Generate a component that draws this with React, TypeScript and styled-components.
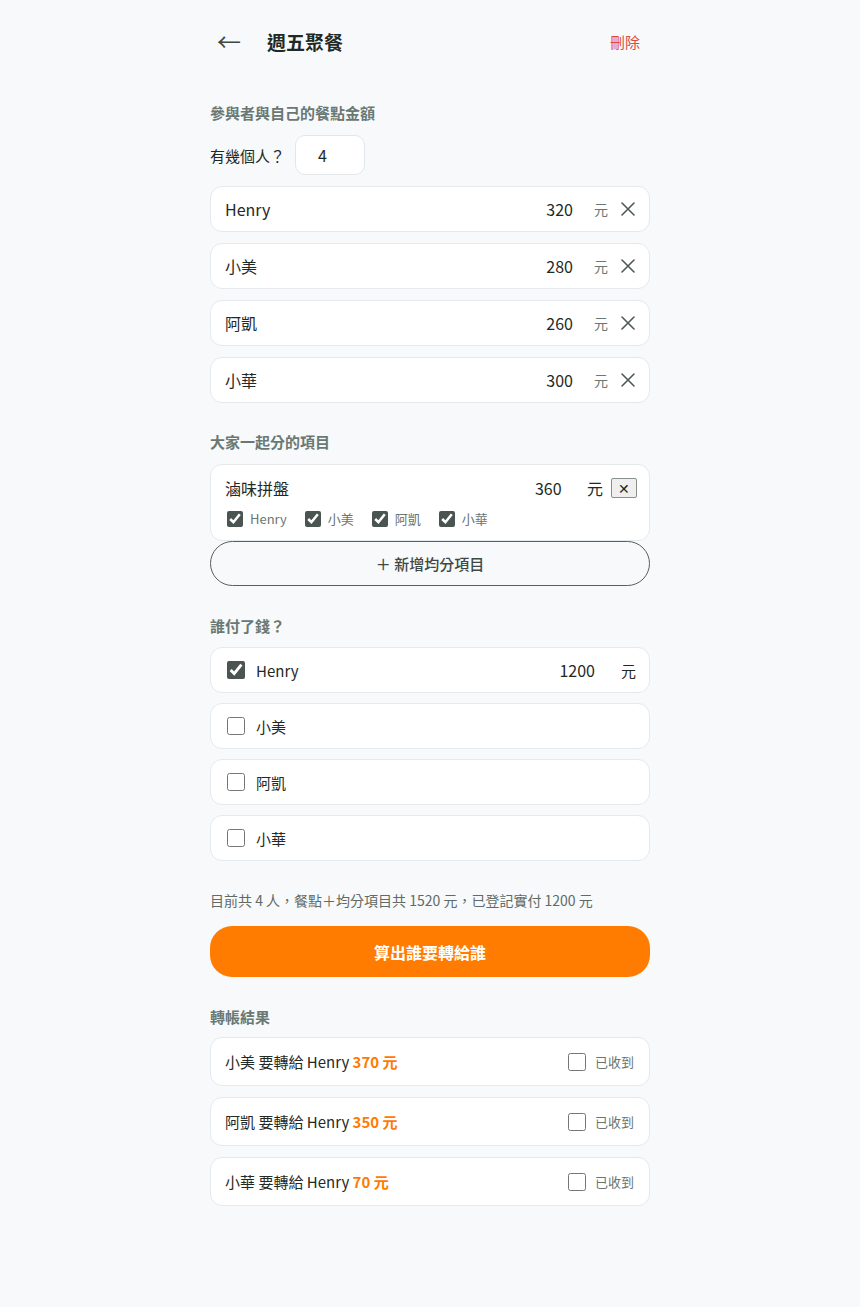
import React from "react";
import styled, { createGlobalStyle } from "styled-components";

const GlobalStyle = createGlobalStyle`
	body {
		margin: 0;
		background: #f7f9fb;
		font-family: "Noto Sans CJK TC", "Noto Sans", sans-serif;
		color: #1f2925;
	}
	input, button {
		font-family: inherit;
	}
`;

const people = [
	{ name: "Henry", amount: 320 },
	{ name: "小美", amount: 280 },
	{ name: "阿凱", amount: 260 },
	{ name: "小華", amount: 300 }
];

const payers = [
	{ name: "Henry", paid: true, amount: 1200 },
	{ name: "小美", paid: false },
	{ name: "阿凱", paid: false },
	{ name: "小華", paid: false }
];

const transfers = [
	{ from: "小美", to: "Henry", amount: 370 },
	{ from: "阿凱", to: "Henry", amount: 350 },
	{ from: "小華", to: "Henry", amount: 70 }
];

const CloseIcon = () => (
	<svg width="14" height="14" viewBox="0 0 14 14" fill="none" stroke="#4f5a55" strokeWidth="1.6" strokeLinecap="round">
		<path d="M1 1L13 13M13 1L1 13" />
	</svg>
);

export default function App() {
	return (
		<Page>
			<GlobalStyle />
			<Header>
				<BackButton aria-label="back">←</BackButton>
				<Title>週五聚餐</Title>
				<DeleteButton>刪除</DeleteButton>
			</Header>

			<SectionLabel $top={42}>參與者與自己的餐點金額</SectionLabel>
			<CountRow>
				有幾個人？
				<CountInput defaultValue="4" />
			</CountRow>
			<List $gap={11} $top={11}>
				{people.map((p) => (
					<PersonRow key={p.name}>
						<Name>{p.name}</Name>
						<Amount>{p.amount}</Amount>
						<Unit>元</Unit>
						<IconButton aria-label="remove">
							<CloseIcon />
						</IconButton>
					</PersonRow>
				))}
			</List>

			<SectionLabel $top={29}>大家一起分的項目</SectionLabel>
			<SharedCard>
				<SharedTop>
					<Name>滷味拼盤</Name>
					<SharedAmount>360</SharedAmount>
					<SharedUnit>元</SharedUnit>
					<SmallX>✕</SmallX>
				</SharedTop>
				<ShareList>
					{people.map((p) => (
						<ShareItem key={p.name}>
							<Check type="checkbox" $size={16} defaultChecked />
							{p.name}
						</ShareItem>
					))}
				</ShareList>
			</SharedCard>
			<AddButton>＋ 新增均分項目</AddButton>

			<SectionLabel $top={30}>誰付了錢？</SectionLabel>
			<List $gap={10} $top={11}>
				{payers.map((p) => (
					<PayerRow key={p.name}>
						<Check type="checkbox" $size={18} defaultChecked={p.paid} />
						<PayerName>{p.name}</PayerName>
						{p.paid && (
							<>
								<PaidAmount>{p.amount}</PaidAmount>
								<PaidUnit>元</PaidUnit>
							</>
						)}
					</PayerRow>
				))}
			</List>

			<Summary>目前共 4 人，餐點＋均分項目共 1520 元，已登記實付 1200 元</Summary>
			<CalcButton>算出誰要轉給誰</CalcButton>

			<SectionLabel $top={30}>轉帳結果</SectionLabel>
			<List $gap={11} $top={10}>
				{transfers.map((t) => (
					<ResultRow key={t.from}>
						<ResultText>
							{t.from} 要轉給 {t.to} <Money>{t.amount} 元</Money>
						</ResultText>
						<Received>
							<Check type="checkbox" $size={18} />
							已收到
						</Received>
					</ResultRow>
				))}
			</List>
		</Page>
	);
}

const Page = styled.div`
	width: 440px;
	margin: 0 auto;
	padding: 21px 0 100px;
`;

const Header = styled.header`
	height: 40px;
	display: flex;
	align-items: center;
`;

const BackButton = styled.button`
	background: none;
	border: none;
	padding: 0 0 0 7px;
	width: 57px;
	text-align: left;
	font-size: 24px;
	line-height: 1;
	color: #3e4844;
	cursor: pointer;
`;

const Title = styled.h1`
	flex: 1;
	margin: 0;
	font-size: 19px;
	font-weight: 700;
	color: #1f2925;
`;

const DeleteButton = styled.button`
	background: none;
	border: none;
	padding: 0 10px 0 0;
	font-size: 15px;
	color: #dc4a3e;
	cursor: pointer;
`;

const SectionLabel = styled.h2<{ $top: number }>`
	margin: ${(p) => p.$top}px 0 0;
	font-size: 15px;
	line-height: 20px;
	font-weight: 700;
	color: #6a7873;
`;

const CountRow = styled.label`
	margin-top: 12px;
	display: flex;
	align-items: center;
	gap: 10px;
	font-size: 15px;
	color: #1f2925;
`;

const CountInput = styled.input`
	box-sizing: border-box;
	width: 70px;
	height: 40px;
	border: 1px solid #e4e7ea;
	border-radius: 10px;
	background: #fff;
	padding: 0 0 0 22px;
	font-size: 16px;
	color: #1f2925;
	outline: none;
`;

const List = styled.div<{ $gap: number; $top: number }>`
	margin-top: ${(p) => p.$top}px;
	display: flex;
	flex-direction: column;
	gap: ${(p) => p.$gap}px;
`;

const Card = styled.div`
	box-sizing: border-box;
	background: #fff;
	border: 1px solid #e6e9ec;
	border-radius: 12px;
`;

const PersonRow = styled(Card)`
	height: 46px;
	display: flex;
	align-items: center;
	padding: 0 14px;
`;

const Name = styled.span`
	flex: 1;
	font-size: 16px;
	color: #1f2925;
`;

const Amount = styled.span`
	font-size: 16px;
	color: #1f2925;
`;

const Unit = styled.span`
	margin-left: 21px;
	font-size: 14px;
	color: #6a7873;
`;

const IconButton = styled.button`
	display: flex;
	background: none;
	border: none;
	padding: 0;
	margin-left: 13px;
	cursor: pointer;
`;

const SharedCard = styled(Card)`
	margin-top: 12px;
	height: 77px;
	padding: 12px 12px 0 14px;
`;

const SharedTop = styled.div`
	display: flex;
	align-items: center;
	height: 22px;
`;

const SharedAmount = styled.span`
	width: 52px;
	font-size: 16px;
	color: #1f2925;
`;

const SharedUnit = styled.span`
	font-size: 16px;
	color: #1f2925;
	margin-right: 8px;
`;

const SmallX = styled.button`
	box-sizing: border-box;
	width: 26px;
	height: 20px;
	padding: 0;
	border: 1px solid #8a8f8d;
	border-radius: 2px;
	background: #efefef;
	font-size: 14px;
	line-height: 1;
	color: #1f2925;
`;

const ShareList = styled.div`
	margin-top: 10px;
	display: flex;
	gap: 16px;
`;

const ShareItem = styled.label`
	display: flex;
	align-items: center;
	gap: 7px;
	font-size: 13px;
	color: #6a7570;
	margin-left: 2px;
`;

const Check = styled.input<{ $size: number }>`
	margin: 0;
	width: ${(p) => p.$size}px;
	height: ${(p) => p.$size}px;
	accent-color: #4a5450;
	flex-shrink: 0;
`;

const AddButton = styled.button`
	box-sizing: border-box;
	width: 100%;
	height: 45px;
	border: 1px solid #58605d;
	border-radius: 23px;
	background: #f7f9fb;
	font-size: 15px;
	font-weight: 500;
	color: #3e4844;
	cursor: pointer;
`;

const PayerRow = styled(Card)`
	height: 46px;
	display: flex;
	align-items: center;
	padding: 0 13px 0 16px;
`;

const PayerName = styled.span`
	flex: 1;
	margin-left: 11px;
	font-size: 15px;
	color: #1f2925;
`;

const PaidAmount = styled.span`
	font-size: 16px;
	color: #1f2925;
`;

const PaidUnit = styled.span`
	margin-left: 26px;
	font-size: 15px;
	color: #1f2925;
`;

const Summary = styled.p`
	margin: 29px 0 0;
	font-size: 14px;
	line-height: 20px;
	color: #5f6b67;
`;

const CalcButton = styled.button`
	margin-top: 16px;
	width: 100%;
	height: 51px;
	border: none;
	border-radius: 22px;
	background: #ff7c00;
	color: #fff;
	font-size: 16px;
	font-weight: 700;
	cursor: pointer;
`;

const ResultRow = styled(Card)`
	height: 49px;
	display: flex;
	align-items: center;
	justify-content: space-between;
	padding: 0 15px 0 14px;
`;

const ResultText = styled.span`
	font-size: 15px;
	color: #1f2925;
`;

const Money = styled.b`
	color: #ff7a00;
	font-weight: 700;
`;

const Received = styled.label`
	display: flex;
	align-items: center;
	gap: 9px;
	font-size: 13px;
	color: #6a7570;
`;
